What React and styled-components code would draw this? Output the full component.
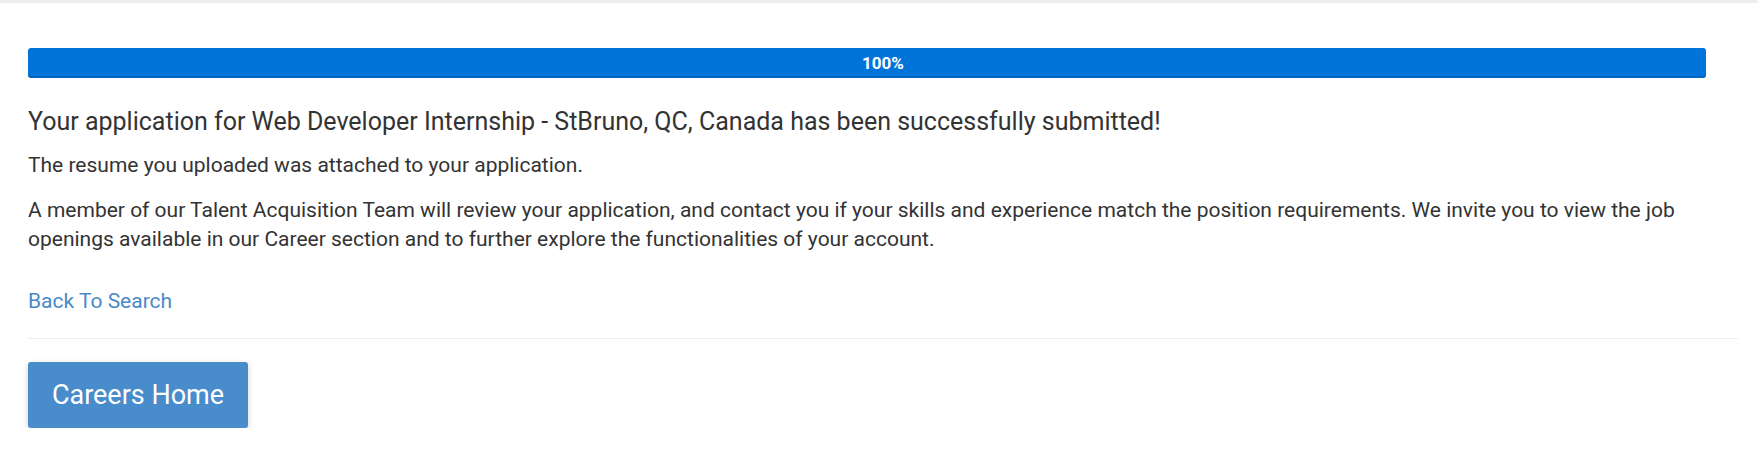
import React from 'react';
import styled, { createGlobalStyle } from 'styled-components';

const GlobalStyle = createGlobalStyle`
  html, body {
    margin: 0;
    padding: 0;
    background: #fff;
  }
  body {
    font-family: Roboto, "Liberation Sans", Arial, sans-serif;
    color: #333;
  }
`;

const TopStrip = styled.div`
  height: 3px;
  background: #eeeeee;
`;

const Container = styled.main`
  padding: 45px 20px 0 28px;
`;

const Progress = styled.div`
  position: relative;
  height: 30px;
`;

const ProgressFill = styled.div`
  height: 100%;
  margin-right: 32px;
  background: #0074d9;
  border-radius: 3px;
  box-shadow: inset 0 -2px 0 rgba(0, 0, 0, 0.12);
`;

const ProgressLabel = styled.span`
  position: absolute;
  inset: 0;
  display: flex;
  align-items: center;
  justify-content: center;
  color: #fff;
  font-weight: 700;
  font-size: 17px;
`;

const Heading = styled.h2`
  margin: 29px 0 0;
  font-size: 25px;
  font-weight: 400;
  line-height: 30px;
  color: #333;
`;

const Text = styled.p`
  margin: ${p => p.$mt}px 0 0;
  font-size: 21px;
  line-height: 29px;
  color: #333;
`;

const BackLink = styled.a`
  display: inline-block;
  margin-top: 33px;
  font-size: 21px;
  line-height: 29px;
  color: #4a89c8;
  text-decoration: none;
`;

const Divider = styled.hr`
  margin: 22px 0 0;
  border: 0;
  border-top: 1px solid #eeeeee;
`;

const HomeButton = styled.button`
  margin-top: 23px;
  width: 220px;
  height: 66px;
  border: 0;
  border-radius: 3px;
  background: #488ccb;
  color: #fff;
  font-family: inherit;
  font-size: 27px;
  box-shadow: 0 2px 6px rgba(0, 0, 0, 0.18);
  cursor: pointer;
`;

export default function App() {
  return (
    <>
      <GlobalStyle />
      <TopStrip />
      <Container>
        <Progress>
          <ProgressFill />
          <ProgressLabel>100%</ProgressLabel>
        </Progress>
        <Heading>
          Your application for Web Developer Internship - StBruno, QC, Canada has been successfully submitted!
        </Heading>
        <Text $mt={14}>The resume you uploaded was attached to your application.</Text>
        <Text $mt={16}>
          A member of our Talent Acquisition Team will review your application, and contact you if your skills and
          experience match the position requirements. We invite you to view the job openings available in our Career
          section and to further explore the functionalities of your account.
        </Text>
        <div>
          <BackLink href="#">Back To Search</BackLink>
        </div>
        <Divider />
        <HomeButton>Careers Home</HomeButton>
      </Container>
    </>
  );
}
